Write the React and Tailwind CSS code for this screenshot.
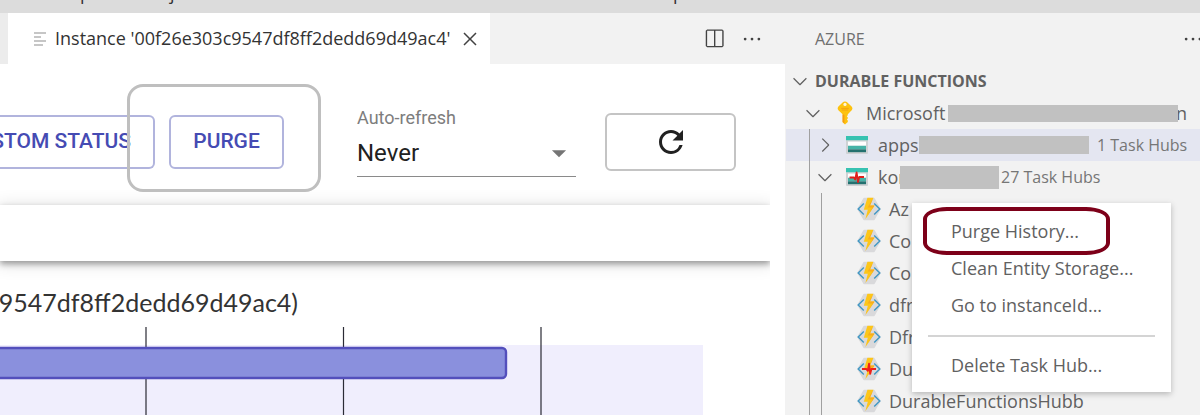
import { useState } from 'react'
import { MdRefresh, MdArrowDropDown } from 'react-icons/md'
import {
  VscChevronDown,
  VscChevronRight,
  VscClose,
  VscEllipsis,
  VscSplitHorizontal
} from 'react-icons/vsc'

const hubs = [
  { name: 'Az' },
  { name: 'Co' },
  { name: 'Co' },
  { name: 'dfr' },
  { name: 'Dfr' },
  { name: 'Du', active: true },
  { name: 'DurableFunctionsHubb' }
]

function KeyIcon() {
  return (
    <svg width="16" height="24" viewBox="0 0 16 24" className="shrink-0">
      <path
        d="M8 0.5C9 0.5 9.7 0.8 10.4 1.5L14.6 5.6C15.7 6.7 15.7 8.3 14.7 9.3L10.8 13.2V14.3L9.8 15.3L10.8 16.4V17.4L9.9 18.4L10.8 19.5V21L8 23.6L5.6 21.2V13.2L1.4 9.3C0.4 8.3 0.4 6.7 1.4 5.6L5.6 1.5C6.3 0.8 7 0.5 8 0.5Z"
        fill="#fdc20e"
      />
      <path d="M7.4 14V22.6L5.6 21V13.2Z" fill="#f59b12" />
      <circle cx="8" cy="3.4" r="1.6" fill="#fff6d8" />
      <path d="M4.2 7.4H11.8M4.8 9H11.2" stroke="#f3a00f" strokeWidth="0.9" />
    </svg>
  )
}

function StorageIcon({ active }) {
  return (
    <svg width="22" height="18" viewBox="0 0 22 18" className="shrink-0">
      <rect y="0" width="22" height="18" rx="1" fill="#cfd2d4" />
      <rect width="22" height="4.2" fill="#37c2b1" />
      <rect x="2" y="5.6" width="18" height="4.2" fill="#fff" />
      <rect x="2" y="9.8" width="18" height="3.6" fill="#46b3a7" />
      <rect x="2" y="13.4" width="18" height="2.8" fill="#23716f" />
      {active && (
        <path
          d="M3.5 9.5H8L9.2 11.5L10.6 4.5L12 14L13.2 9H18"
          fill="none"
          stroke="#e0201b"
          strokeWidth="1.8"
          strokeLinejoin="round"
        />
      )}
    </svg>
  )
}

function HubIcon({ active }) {
  return (
    <svg width="24" height="24" viewBox="0 0 24 24" className="shrink-0">
      <path
        d="M7 1.5H17L23 12L17 22.5H7L1 12Z"
        fill="#d9d9db"
        stroke="#d9d9db"
        strokeWidth="1.5"
        strokeLinejoin="round"
      />
      <path
        d="M6.8 6.4L1.2 12L6.8 17.6M17.2 6.4L22.8 12L17.2 17.6"
        fill="none"
        stroke="#3f97c4"
        strokeWidth="1.4"
      />
      <path d="M10.4 0.8H16.4L13 8.4H17.6L8.4 22L10.8 12.8H6.8Z" fill="#fdc619" />
      <path d="M16.4 0.8L10.6 10.6H15.6L8.4 22L17.6 8.4H13Z" fill="#f9ac1d" />
      {active && (
        <path
          d="M5 12H9.4L10.8 13.8L12 6.8L13.2 16.8L14.4 12H19"
          fill="none"
          stroke="#f0201a"
          strokeWidth="1.9"
          strokeLinejoin="round"
        />
      )}
    </svg>
  )
}

function TabIcon() {
  return (
    <svg width="13" height="14" viewBox="0 0 13 14" className="shrink-0">
      <path
        d="M0 1H12M0 5H7M0 9H12M0 13H9"
        stroke="#b4b4b4"
        strokeWidth="1.3"
      />
    </svg>
  )
}

// only the descenders of the window title reach into view
function TitleBar() {
  return (
    <div className="h-[13px] overflow-hidden bg-[#dcdcdc]">
      <div className="-mt-4 flex text-[18px] leading-[18px] text-[#333]">
        <span className="ml-20 w-[90px]">p</span>
        <span className="w-[503px]">j</span>
        <span>p</span>
      </div>
    </div>
  )
}

function EditorTabs() {
  return (
    <div className="flex h-[51px] bg-[#f2f2f2]">
      <div className="w-2 bg-[#ececec]" />
      <div className="flex w-[482px] items-center bg-white pl-[26px]">
        <TabIcon />
        <span className="ml-2 w-[403px] text-[18px] whitespace-nowrap text-[#333]">
          Instance '00f26e303c9547df8ff2dedd69d49ac4'
        </span>
        <button type="button" aria-label="Close tab" className="text-[#424242]">
          <VscClose size={24} />
        </button>
      </div>
      <div className="ml-auto flex items-center gap-4 pr-[22px] text-[#424242]">
        <button type="button" aria-label="Split editor">
          <VscSplitHorizontal size={22} />
        </button>
        <button type="button" aria-label="More actions">
          <VscEllipsis size={22} />
        </button>
      </div>
    </div>
  )
}

function Toolbar() {
  const [refresh, setRefresh] = useState('Never')

  return (
    <div className="relative flex h-[141px] items-center pt-[14px] font-[Roboto,sans-serif]">
      <button
        type="button"
        className="flex h-[54px] w-[155px] items-center justify-end rounded-r-md border-2 border-l-0 border-[#b1b4dd] pr-[22px] text-[21px] font-medium whitespace-nowrap text-[#454bb3]"
      >
        CUSTOM STATUS
      </button>
      <button
        type="button"
        className="ml-[14px] h-[54px] w-[115px] rounded-md border-2 border-[#b1b4dd] text-[21px] font-medium text-[#454bb3]"
      >
        PURGE
      </button>
      <div className="ml-[73px] flex w-[219px] flex-col border-b border-[#8a8a8a]">
        <label htmlFor="refresh" className="text-[18px] leading-6 text-[#7d7d7d]">
          Auto-refresh
        </label>
        <div className="relative flex items-center">
          <select
            id="refresh"
            value={refresh}
            onChange={(e) => setRefresh(e.target.value)}
            className="h-[46px] w-full appearance-none bg-transparent text-[24px] text-[#212121]"
          >
            <option>Never</option>
            <option>5 sec.</option>
          </select>
          <MdArrowDropDown
            size={34}
            className="pointer-events-none absolute right-0 text-[#757575]"
          />
        </div>
      </div>
      <button
        type="button"
        aria-label="Refresh"
        className="ml-[29px] flex h-[58px] w-[131px] items-center justify-center rounded-md border-2 border-[#c4c4c4] text-[#212121]"
      >
        <MdRefresh size={36} />
      </button>
      {/* highlight around the purge button */}
      <div className="pointer-events-none absolute top-5 left-[127px] h-[108px] w-[194px] rounded-2xl border-3 border-[#bfbfbf]" />
    </div>
  )
}

function Gantt() {
  return (
    <svg width="703" height="88" className="block">
      <rect y="18" width="703" height="70" fill="#f0eefd" />
      <path d="M146 0V88M343.5 0V88M541 0V88" stroke="#2b2b35" strokeWidth="1.2" />
      <rect
        x="-10"
        y="21"
        width="516"
        height="30"
        rx="4"
        fill="#8a90dd"
        stroke="#534fbc"
        strokeWidth="2.4"
      />
    </svg>
  )
}

function Editor() {
  return (
    <main className="flex min-w-0 flex-1 flex-col bg-white">
      <EditorTabs />
      <div className="mr-[15px] flex-1 overflow-hidden">
        <Toolbar />
        <div className="h-14 bg-white shadow-[0_3px_6px_0_rgba(0,0,0,0.35),0_2px_16px_2px_rgba(0,0,0,0.12)]" />
        <h2 className="flex h-[66px] w-[298px] items-center justify-end pt-[18px] font-[Lato,sans-serif] text-[25px] text-[#333]">
          9547df8ff2dedd69d49ac4)
        </h2>
        <Gantt />
      </div>
    </main>
  )
}

function Redacted({ className }) {
  return <span className={`relative shrink-0 bg-[#c1c1c1] ${className}`} />
}

function ContextMenu() {
  const item = 'block h-[37px] w-full pl-[39px] text-left'

  return (
    <div className="absolute top-[190px] left-[127px] w-[259px] bg-white pt-[10px] pb-2 text-[18px] shadow-[0_2px_6px_rgba(0,0,0,0.25)]">
      <button type="button" className={item}>Purge History...</button>
      <button type="button" className={item}>Clean Entity Storage...</button>
      <button type="button" className={item}>Go to instanceId...</button>
      <hr className="mx-4 mt-[11px] mb-[10px] border-t-2 border-[#d4d4d4]" />
      <button type="button" className={item}>Delete Task Hub...</button>
      <div className="pointer-events-none absolute top-1 left-[11px] h-12 w-[187px] rounded-[24px/12px] border-4 border-[#7d0019]" />
    </div>
  )
}

function Sidebar() {
  return (
    <aside className="relative w-[415px] shrink-0 bg-[#f2f2f2] text-[18px] text-[#616161]">
      <div className="flex h-[52px] items-center justify-between overflow-hidden pl-[30px]">
        <h2 className="text-[16px] text-[#6f6f6f]">AZURE</h2>
        <button type="button" aria-label="Views and more actions" className="-mr-1 text-[#424242]">
          <VscEllipsis size={22} />
        </button>
      </div>
      <div className="flex h-8 items-center pl-1">
        <VscChevronDown size={22} />
        <h3 className="ml-1 text-[16px] font-bold">DURABLE FUNCTIONS</h3>
      </div>
      <ul>
        <li className="flex h-8 items-center pl-[17px]">
          <VscChevronDown size={22} className="shrink-0" />
          <span className="ml-[13px]">
            <KeyIcon />
          </span>
          <span className="ml-[13px] w-[82px]">Microsoft</span>
          <Redacted className="h-[17px] w-[230px]" />
          <span className="-ml-[2px]">n</span>
        </li>
        <li className="ml-px flex h-8 items-center bg-[#e4e6f1] pl-[23px]">
          <span className="h-8 w-px shrink-0 bg-[#a0a0a0]" />
          <VscChevronRight size={22} className="ml-1 shrink-0" />
          <span className="ml-[10px]">
            <StorageIcon />
          </span>
          <span className="ml-[10px] w-[41px]">appsr</span>
          <Redacted className="h-[18px] w-[170px]" />
          <span className="ml-2 text-[16px] text-[#767676]">1 Task Hubs</span>
        </li>
        <li className="flex h-8 items-center pl-6">
          <span className="h-8 w-px shrink-0 bg-[#a0a0a0]" />
          <VscChevronDown size={22} className="ml-1 shrink-0" />
          <span className="ml-[10px]">
            <StorageIcon active />
          </span>
          <span className="ml-[10px] w-[22px]">kor</span>
          <Redacted className="h-[23px] w-[99px]" />
          <span className="ml-[2px] text-[16px] text-[#767676]">27 Task Hubs</span>
        </li>
        {hubs.map((hub, i) => (
          <li key={i} className="flex h-8 items-center pl-6">
            <span className="h-8 w-px bg-[#a0a0a0]" />
            <span className="ml-[11px] h-8 w-px bg-[#a0a0a0]" />
            <span className="ml-[35px]">
              <HubIcon active={hub.active} />
            </span>
            <span className="ml-2">{hub.name}</span>
          </li>
        ))}
      </ul>
      <ContextMenu />
    </aside>
  )
}

function App() {
  return (
    <div className="flex h-screen flex-col overflow-hidden font-['Open_Sans',sans-serif]">
      <TitleBar />
      <div className="flex min-h-0 flex-1">
        <Editor />
        <Sidebar />
      </div>
    </div>
  )
}

export default App
